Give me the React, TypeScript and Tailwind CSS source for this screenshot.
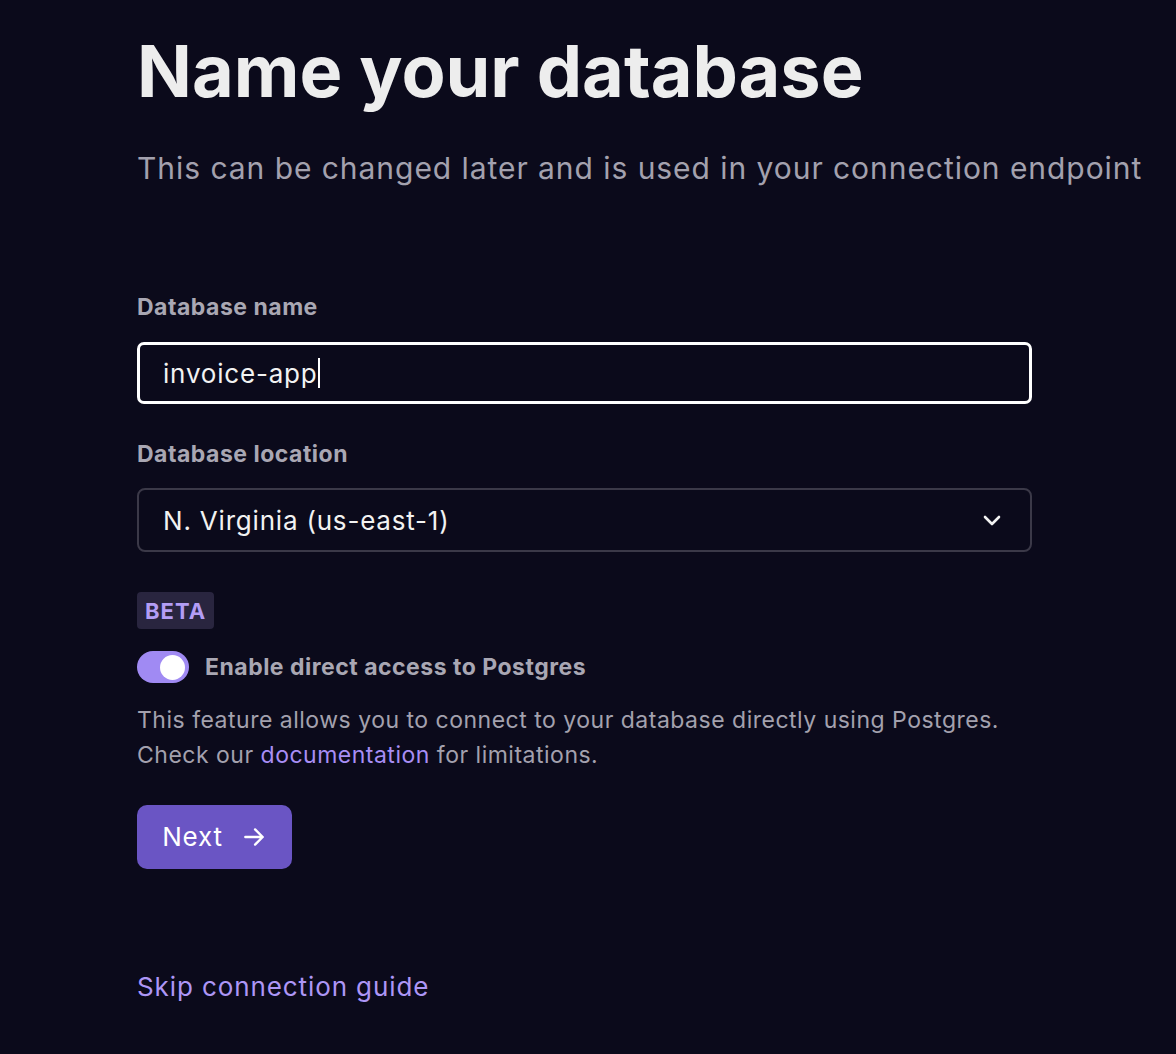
import React from "react";

export default function App() {
  return (
    <div className="min-h-[1054px] w-full bg-[#0b0a1b] text-[#ededed]" style={{ fontFamily: "Inter, 'Noto Sans', sans-serif" }}>
      <div className="pl-[137px] pt-[27px] w-[1100px]">
        <h1 className="text-[72px] leading-[88px] font-bold text-[#ededed] whitespace-nowrap">Name your database</h1>
        <p className="mt-[33px] text-[30px] leading-[40px] tracking-[0.95px] text-[#a3a1ae] whitespace-nowrap">This can be changed later and is used in your connection endpoint</p>

        <div className="mt-[104px] w-[895px]">
          <label className="block text-[23px] leading-[30px] font-bold tracking-[0.5px] text-[#a9a7b3]">Database name</label>
          <div className="mt-[20px] h-[62px] rounded-[7px] border-[3px] border-white flex items-center px-[23px]">
            <span className="text-[26px] tracking-[0.8px] text-[#f2f2f2]">invoice-app</span>
            <span className="ml-[1px] w-[1.5px] h-[30px] bg-white" />
          </div>

          <label className="mt-[35px] block text-[23px] leading-[30px] font-bold tracking-[0.5px] text-[#a9a7b3]">Database location</label>
          <div className="mt-[19px] h-[64px] rounded-[8px] border-2 border-[#3b3948] flex items-center justify-between pl-[24px] pr-[26px]">
            <span className="text-[26px] tracking-[0.8px] text-[#f2f2f2]">N. Virginia (us-east-1)</span>
            <svg width="24" height="24" viewBox="0 0 24 24" fill="none" stroke="#f2f2f2" strokeWidth="2.6" strokeLinecap="round" strokeLinejoin="round">
              <path d="M5 9l7 7 7-7" />
            </svg>
          </div>

          <div className="mt-[40px] inline-flex items-center h-[37px] px-[8px] rounded-[4px] bg-[#29253f]">
            <span className="text-[22px] font-bold tracking-[1px] text-[#b39df5] leading-none">BETA</span>
          </div>

          <div className="mt-[21px] flex items-center gap-[16px]">
            <div className="w-[52px] h-[32px] rounded-full bg-[#a08af3] flex items-center justify-end pr-[4px]">
              <div className="w-[25px] h-[25px] rounded-full bg-white" />
            </div>
            <span className="text-[23px] font-bold tracking-[0.5px] text-[#a9a7b3]">Enable direct access to Postgres</span>
          </div>

          <p className="mt-[18px] text-[23px] leading-[35px] tracking-[0.5px] text-[#a3a1ae] whitespace-nowrap">
            This feature allows you to connect to your database directly using Postgres.
            <br />
            Check our <a className="text-[#a88ef5]">documentation</a> for limitations.
          </p>

          <button className="mt-[32px] h-[64px] w-[155px] rounded-[10px] bg-[#6a55c4] flex items-center justify-center gap-[18px] text-white text-[26px] tracking-[0.8px]">
            <span>Next</span>
            <svg width="26" height="26" viewBox="0 0 24 24" fill="none" stroke="white" strokeWidth="2.2" strokeLinecap="round" strokeLinejoin="round">
              <path d="M4 12h16M13 5l7 7-7 7" />
            </svg>
          </button>

          <a className="block mt-[100px] text-[26px] leading-[36px] tracking-[0.9px] text-[#ad96f6]">Skip connection guide</a>
        </div>
      </div>
    </div>
  );
}
